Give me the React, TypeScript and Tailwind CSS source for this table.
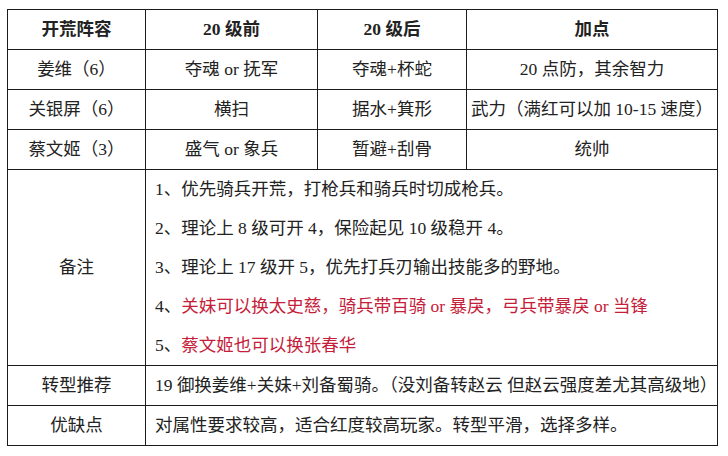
import React from 'react';

const rows = [
  { name: '姜维（6）', before: '夺魂 or 抚军', after: '夺魂+杯蛇', points: '20 点防，其余智力' },
  { name: '关银屏（6）', before: '横扫', after: '据水+箕形', points: '武力（满红可以加 10-15 速度）' },
  { name: '蔡文姬（3）', before: '盛气 or 象兵', after: '暂避+刮骨', points: '统帅' },
];

const notes: { num: string; text: string; red?: boolean }[] = [
  { num: '1、', text: '优先骑兵开荒，打枪兵和骑兵时切成枪兵。' },
  { num: '2、', text: '理论上 8 级可开 4，保险起见 10 级稳开 4。' },
  { num: '3、', text: '理论上 17 级开 5，优先打兵刃输出技能多的野地。' },
  { num: '4、', text: '关妹可以换太史慈，骑兵带百骑 or 暴戾，弓兵带暴戾 or 当锋', red: true },
  { num: '5、', text: '蔡文姬也可以换张春华', red: true },
];

const cell = 'border border-[#1c1c1c] p-0';

export default function App() {
  return (
    <div
      className="w-[728px] h-[456px] bg-white pl-[7px] pt-[9px] text-[17.5px] text-[#222]"
      style={{ fontFamily: '"Liberation Serif", "Noto Sans CJK SC", serif' }}
    >
      <table className="w-[710px] table-fixed border-collapse border-[1.5px] border-[#111]">
        <colgroup>
          <col className="w-[138px]" />
          <col className="w-[172px]" />
          <col className="w-[149px]" />
          <col className="w-[251px]" />
        </colgroup>
        <tbody>
          <tr className="h-[40px] font-bold">
            <td className={`${cell} text-center`}>开荒阵容</td>
            <td className={`${cell} text-center`}>20 级前</td>
            <td className={`${cell} text-center`}>20 级后</td>
            <td className={`${cell} text-center`}>加点</td>
          </tr>
          {rows.map((r) => (
            <tr key={r.name} className="h-[40px]">
              <td className={`${cell} text-center`}>{r.name}</td>
              <td className={`${cell} text-center`}>{r.before}</td>
              <td className={`${cell} text-center`}>{r.after}</td>
              <td className={`${cell} text-center whitespace-nowrap`}>{r.points}</td>
            </tr>
          ))}
          <tr className="h-[195px]">
            <td className={`${cell} text-center`}>备注</td>
            <td className={`${cell} pl-[9px]`} colSpan={3}>
              {notes.map((n) => (
                <div key={n.num} className="leading-[39px] whitespace-nowrap">
                  {n.num}
                  <span className={n.red ? 'text-[#c4203a]' : ''}>{n.text}</span>
                </div>
              ))}
            </td>
          </tr>
          <tr className="h-[40px]">
            <td className={`${cell} text-center`}>转型推荐</td>
            <td className={`${cell} pl-[9px] whitespace-nowrap`} colSpan={3}>
              19 御换姜维+关妹+刘备蜀骑。（没刘备转赵云 但赵云强度差尤其高级地）
            </td>
          </tr>
          <tr className="h-[40px]">
            <td className={`${cell} text-center`}>优缺点</td>
            <td className={`${cell} pl-[9px]`} colSpan={3}>
              对属性要求较高，适合红度较高玩家。转型平滑，选择多样。
            </td>
          </tr>
        </tbody>
      </table>
    </div>
  );
}
